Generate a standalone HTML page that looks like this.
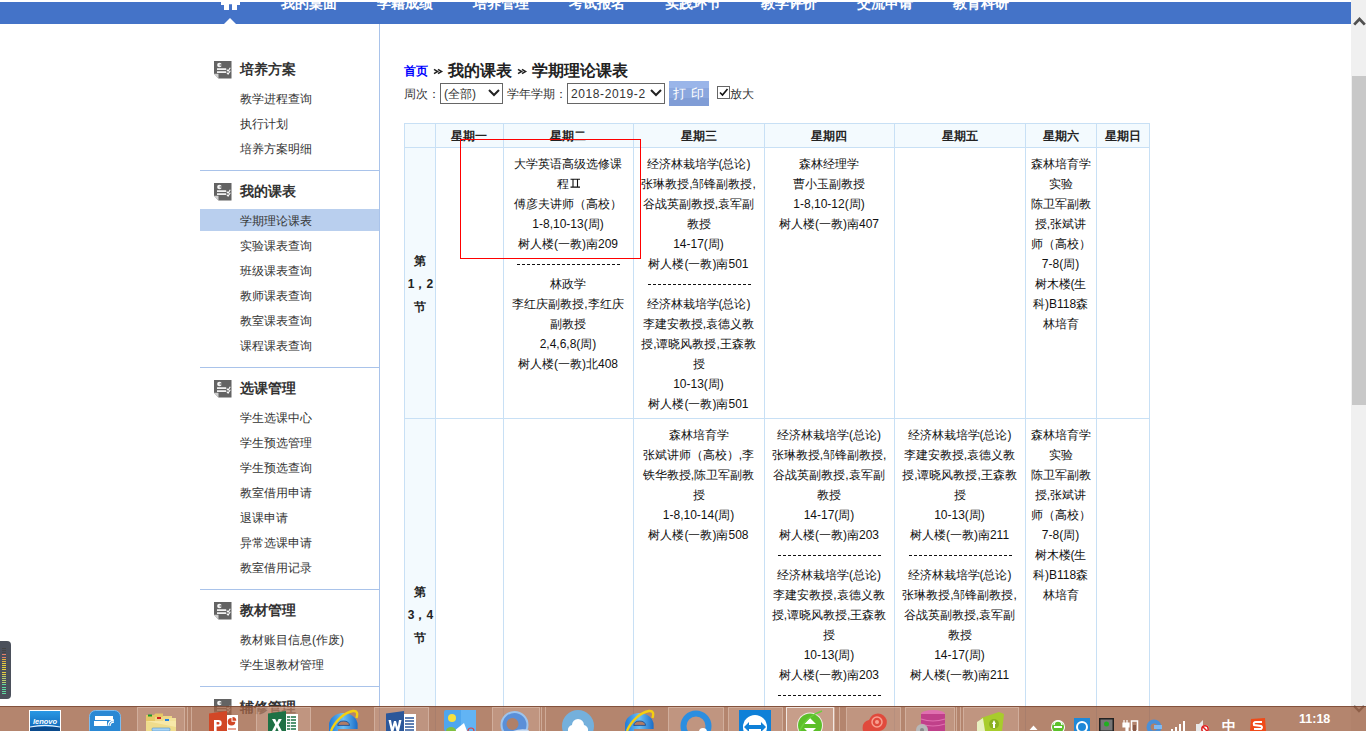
<!DOCTYPE html><html><head><meta charset="utf-8"><style>

html,body{margin:0;padding:0;}
body{width:1366px;height:731px;overflow:hidden;position:relative;background:#fff;font-family:"Liberation Sans",sans-serif;color:#333;}
.a{position:absolute;white-space:nowrap;}
.t12{font-size:12px;line-height:20px;height:20px;}
.tb{color:#111;}
.c{text-align:center;}
.nav{color:#fff;font-size:14px;font-weight:bold;line-height:20px;}
.sbt{font-size:14px;font-weight:bold;line-height:20px;color:#333;}
.sbi{font-size:12px;line-height:20px;color:#333;}
.ic{position:absolute;width:18px;height:18px;}
.vl{position:absolute;width:1px;background:#c8e0f5;}
.hl{position:absolute;height:1px;background:#c8e0f5;}
.dash{display:inline-block;position:relative;left:1px;width:104px;height:1px;vertical-align:middle;background:repeating-linear-gradient(90deg,#111 0 3px,transparent 3px 5px);}

</style></head><body>
<div class="a" style="left:0;top:2px;width:1351px;height:22px;background:#4473c8;"></div>
<svg class="a" style="left:218px;top:0" width="26" height="12" viewBox="0 0 26 12"><path d="M3 2 H22 V5 H19 V10 H14 V4.2 H11 V10 H6 V5 H3 Z" fill="#fff"/></svg>
<svg class="a" style="left:224px;top:17px" width="12" height="7" viewBox="0 0 12 7"><path d="M0 7 L6 1 L12 7 Z" fill="#fff"/></svg>
<div class="a nav" style="left:281px;top:-7px;height:20px;">我的桌面</div>
<div class="a nav" style="left:377px;top:-7px;height:20px;">学籍成绩</div>
<div class="a nav" style="left:473px;top:-7px;height:20px;">培养管理</div>
<div class="a nav" style="left:569px;top:-7px;height:20px;">考试报名</div>
<div class="a nav" style="left:665px;top:-7px;height:20px;">实践环节</div>
<div class="a nav" style="left:761px;top:-7px;height:20px;">教学评价</div>
<div class="a nav" style="left:857px;top:-7px;height:20px;">交流申请</div>
<div class="a nav" style="left:953px;top:-7px;height:20px;">教育科研</div>
<div class="a" style="left:0;top:0;width:1351px;height:2px;background:#fff;"></div>
<div class="a" style="left:379px;top:24px;width:1px;height:707px;background:#a9c3ea;"></div>
<div class="ic" style="left:214px;top:61px"><svg width="18" height="18" viewBox="0 0 18 18"><path d="M0 0 H17.5 V17.6 H4.5 L0 12.8 Z" fill="#636363"/><path d="M0 12.8 L4.5 12.8 L4.5 17.6 Z" fill="#d0d0d0"/><circle cx="5.4" cy="4" r="2.3" fill="#f4f4f4"/><rect x="5.6" y="3.4" width="2.4" height="1.2" fill="#636363"/><rect x="3" y="7.3" width="9.2" height="1.6" fill="#fff"/><rect x="3" y="10.3" width="9.2" height="1.6" fill="#fff"/><path d="M12.8 8.6 L14.1 10.1 L16.3 6.8 M12.8 11.6 L14.1 13.1 L16.3 9.8" stroke="#fff" stroke-width="1.1" fill="none"/></svg></div>
<div class="a sbt" style="left:240px;top:59px">培养方案</div>
<div class="a sbi" style="left:240px;top:89px">教学进程查询</div>
<div class="a sbi" style="left:240px;top:114px">执行计划</div>
<div class="a sbi" style="left:240px;top:139px">培养方案明细</div>
<div class="a" style="left:200px;top:170px;width:179px;height:1px;background:#a9c3ea;"></div>
<div class="ic" style="left:214px;top:183px"><svg width="18" height="18" viewBox="0 0 18 18"><path d="M0 0 H17.5 V17.6 H4.5 L0 12.8 Z" fill="#636363"/><path d="M0 12.8 L4.5 12.8 L4.5 17.6 Z" fill="#d0d0d0"/><circle cx="5.4" cy="4" r="2.3" fill="#f4f4f4"/><rect x="5.6" y="3.4" width="2.4" height="1.2" fill="#636363"/><rect x="3" y="7.3" width="9.2" height="1.6" fill="#fff"/><rect x="3" y="10.3" width="9.2" height="1.6" fill="#fff"/><path d="M12.8 8.6 L14.1 10.1 L16.3 6.8 M12.8 11.6 L14.1 13.1 L16.3 9.8" stroke="#fff" stroke-width="1.1" fill="none"/></svg></div>
<div class="a sbt" style="left:240px;top:181px">我的课表</div>
<div class="a" style="left:200px;top:209px;width:179px;height:22px;background:#b9cfee;"></div>
<div class="a sbi" style="left:240px;top:211px">学期理论课表</div>
<div class="a sbi" style="left:240px;top:236px">实验课表查询</div>
<div class="a sbi" style="left:240px;top:261px">班级课表查询</div>
<div class="a sbi" style="left:240px;top:286px">教师课表查询</div>
<div class="a sbi" style="left:240px;top:311px">教室课表查询</div>
<div class="a sbi" style="left:240px;top:336px">课程课表查询</div>
<div class="a" style="left:200px;top:367px;width:179px;height:1px;background:#a9c3ea;"></div>
<div class="ic" style="left:214px;top:380px"><svg width="18" height="18" viewBox="0 0 18 18"><path d="M0 0 H17.5 V17.6 H4.5 L0 12.8 Z" fill="#636363"/><path d="M0 12.8 L4.5 12.8 L4.5 17.6 Z" fill="#d0d0d0"/><circle cx="5.4" cy="4" r="2.3" fill="#f4f4f4"/><rect x="5.6" y="3.4" width="2.4" height="1.2" fill="#636363"/><rect x="3" y="7.3" width="9.2" height="1.6" fill="#fff"/><rect x="3" y="10.3" width="9.2" height="1.6" fill="#fff"/><path d="M12.8 8.6 L14.1 10.1 L16.3 6.8 M12.8 11.6 L14.1 13.1 L16.3 9.8" stroke="#fff" stroke-width="1.1" fill="none"/></svg></div>
<div class="a sbt" style="left:240px;top:378px">选课管理</div>
<div class="a sbi" style="left:240px;top:408px">学生选课中心</div>
<div class="a sbi" style="left:240px;top:433px">学生预选管理</div>
<div class="a sbi" style="left:240px;top:458px">学生预选查询</div>
<div class="a sbi" style="left:240px;top:483px">教室借用申请</div>
<div class="a sbi" style="left:240px;top:508px">退课申请</div>
<div class="a sbi" style="left:240px;top:533px">异常选课申请</div>
<div class="a sbi" style="left:240px;top:558px">教室借用记录</div>
<div class="a" style="left:200px;top:589px;width:179px;height:1px;background:#a9c3ea;"></div>
<div class="ic" style="left:214px;top:602px"><svg width="18" height="18" viewBox="0 0 18 18"><path d="M0 0 H17.5 V17.6 H4.5 L0 12.8 Z" fill="#636363"/><path d="M0 12.8 L4.5 12.8 L4.5 17.6 Z" fill="#d0d0d0"/><circle cx="5.4" cy="4" r="2.3" fill="#f4f4f4"/><rect x="5.6" y="3.4" width="2.4" height="1.2" fill="#636363"/><rect x="3" y="7.3" width="9.2" height="1.6" fill="#fff"/><rect x="3" y="10.3" width="9.2" height="1.6" fill="#fff"/><path d="M12.8 8.6 L14.1 10.1 L16.3 6.8 M12.8 11.6 L14.1 13.1 L16.3 9.8" stroke="#fff" stroke-width="1.1" fill="none"/></svg></div>
<div class="a sbt" style="left:240px;top:600px">教材管理</div>
<div class="a sbi" style="left:240px;top:630px">教材账目信息(作废)</div>
<div class="a sbi" style="left:240px;top:655px">学生退教材管理</div>
<div class="a" style="left:200px;top:686px;width:179px;height:1px;background:#a9c3ea;"></div>
<div class="ic" style="left:214px;top:699px"><svg width="18" height="18" viewBox="0 0 18 18"><path d="M0 0 H17.5 V17.6 H4.5 L0 12.8 Z" fill="#636363"/><path d="M0 12.8 L4.5 12.8 L4.5 17.6 Z" fill="#d0d0d0"/><circle cx="5.4" cy="4" r="2.3" fill="#f4f4f4"/><rect x="5.6" y="3.4" width="2.4" height="1.2" fill="#636363"/><rect x="3" y="7.3" width="9.2" height="1.6" fill="#fff"/><rect x="3" y="10.3" width="9.2" height="1.6" fill="#fff"/><path d="M12.8 8.6 L14.1 10.1 L16.3 6.8 M12.8 11.6 L14.1 13.1 L16.3 9.8" stroke="#fff" stroke-width="1.1" fill="none"/></svg></div>
<div class="a sbt" style="left:240px;top:697px">辅修管理</div>
<div class="a" style="left:404px;top:61px;font-size:12px;line-height:20px;color:#0000ff;font-weight:bold;">首页</div>
<svg class="a" style="left:433px;top:68px" width="11" height="7" viewBox="0 0 11 7"><path d="M1 1.3 L4.6 3.5 L1 5.7 M5 1.3 L8.6 3.5 L5 5.7" stroke="#222" stroke-width="1.5" fill="none"/></svg>
<div class="a" style="left:448px;top:60px;font-size:16px;line-height:22px;color:#222;font-weight:bold;">我的课表</div>
<svg class="a" style="left:517px;top:68px" width="11" height="7" viewBox="0 0 11 7"><path d="M1 1.3 L4.6 3.5 L1 5.7 M5 1.3 L8.6 3.5 L5 5.7" stroke="#222" stroke-width="1.5" fill="none"/></svg>
<div class="a" style="left:532px;top:60px;font-size:16px;line-height:22px;color:#222;font-weight:bold;">学期理论课表</div>
<div class="a t12" style="left:404px;top:84px;">周次：</div>
<div class="a" style="left:440px;top:83px;width:61px;height:19px;border:1px solid #666;"></div>
<div class="a t12" style="left:444px;top:84px;">(全部)</div>
<svg class="a" style="left:488px;top:89px" width="12" height="8" viewBox="0 0 12 8"><path d="M1 1 L6 6 L11 1" stroke="#222" stroke-width="2" fill="none"/></svg>
<div class="a t12" style="left:507px;top:84px;">学年学期：</div>
<div class="a" style="left:567px;top:83px;width:96px;height:19px;border:1px solid #666;"></div>
<div class="a t12" style="left:571px;top:84px;letter-spacing:0.6px;">2018-2019-2</div>
<svg class="a" style="left:650px;top:89px" width="12" height="8" viewBox="0 0 12 8"><path d="M1 1 L6 6 L11 1" stroke="#222" stroke-width="2" fill="none"/></svg>
<div class="a" style="left:669px;top:81px;width:40px;height:25px;background:linear-gradient(#9ab5e9 0%,#9ab5e9 28%,#8ba7de 28%,#8ba7de 68%,#809dd6 68%,#809dd6 100%);"></div>
<div class="a" style="left:673px;top:84px;font-size:13px;line-height:20px;color:#fff;letter-spacing:0.5px;">打 印</div>
<div class="a" style="left:717px;top:86px;width:11px;height:11px;border:1px solid #666;background:#fff;"></div>
<svg class="a" style="left:718px;top:87px" width="11" height="11" viewBox="0 0 11 11"><path d="M2 5.5 L4.5 8 L9.5 2" stroke="#111" stroke-width="1.6" fill="none"/></svg>
<div class="a t12" style="left:730px;top:84px;">放大</div>
<div class="a" style="left:404px;top:123px;width:745px;height:24px;background:#f3fafe;"></div>
<div class="a" style="left:404px;top:123px;width:31px;height:777px;background:#f3fafe;"></div>
<div class="vl" style="left:404px;top:123px;height:777px"></div>
<div class="vl" style="left:435px;top:123px;height:777px"></div>
<div class="vl" style="left:503px;top:123px;height:777px"></div>
<div class="vl" style="left:633px;top:123px;height:777px"></div>
<div class="vl" style="left:764px;top:123px;height:777px"></div>
<div class="vl" style="left:894px;top:123px;height:777px"></div>
<div class="vl" style="left:1025px;top:123px;height:777px"></div>
<div class="vl" style="left:1096px;top:123px;height:777px"></div>
<div class="vl" style="left:1149px;top:123px;height:777px"></div>
<div class="hl" style="left:404px;top:123px;width:746px"></div>
<div class="hl" style="left:404px;top:147px;width:746px"></div>
<div class="hl" style="left:404px;top:418px;width:746px"></div>
<div class="a t12 c" style="left:435px;width:68px;top:126px;font-weight:bold;color:#222;">星期一</div>
<div class="a t12 c" style="left:503px;width:130px;top:126px;font-weight:bold;color:#222;">星期二</div>
<div class="a t12 c" style="left:633px;width:131px;top:126px;font-weight:bold;color:#222;">星期三</div>
<div class="a t12 c" style="left:764px;width:130px;top:126px;font-weight:bold;color:#222;">星期四</div>
<div class="a t12 c" style="left:894px;width:131px;top:126px;font-weight:bold;color:#222;">星期五</div>
<div class="a t12 c" style="left:1025px;width:71px;top:126px;font-weight:bold;color:#222;">星期六</div>
<div class="a t12 c" style="left:1096px;width:53px;top:126px;font-weight:bold;color:#222;">星期日</div>
<div class="a t12 c tb" style="left:503px;width:130px;top:154px;">大学英语高级选修课</div>
<div class="a t12 c tb" style="left:503px;width:130px;top:174px;"></div>
<div class="a t12 c tb" style="left:503px;width:130px;top:194px;">傅彦夫讲师（高校）</div>
<div class="a t12 c tb" style="left:503px;width:130px;top:214px;">1-8,10-13(周)</div>
<div class="a t12 c tb" style="left:503px;width:130px;top:234px;">树人楼(一教)南209</div>
<div class="a t12 c tb" style="left:503px;width:130px;top:254px;"><span class="dash"></span></div>
<div class="a t12 c tb" style="left:503px;width:130px;top:274px;">林政学</div>
<div class="a t12 c tb" style="left:503px;width:130px;top:294px;">李红庆副教授,李红庆</div>
<div class="a t12 c tb" style="left:503px;width:130px;top:314px;">副教授</div>
<div class="a t12 c tb" style="left:503px;width:130px;top:334px;">2,4,6,8(周)</div>
<div class="a t12 c tb" style="left:503px;width:130px;top:354px;">树人楼(一教)北408</div>
<div class="a t12 c tb" style="left:633px;width:131px;top:154px;">经济林栽培学(总论)</div>
<div class="a t12 c tb" style="left:633px;width:131px;top:174px;">张琳教授,邹锋副教授,</div>
<div class="a t12 c tb" style="left:633px;width:131px;top:194px;">谷战英副教授,袁军副</div>
<div class="a t12 c tb" style="left:633px;width:131px;top:214px;">教授</div>
<div class="a t12 c tb" style="left:633px;width:131px;top:234px;">14-17(周)</div>
<div class="a t12 c tb" style="left:633px;width:131px;top:254px;">树人楼(一教)南501</div>
<div class="a t12 c tb" style="left:633px;width:131px;top:274px;"><span class="dash"></span></div>
<div class="a t12 c tb" style="left:633px;width:131px;top:294px;">经济林栽培学(总论)</div>
<div class="a t12 c tb" style="left:633px;width:131px;top:314px;">李建安教授,袁德义教</div>
<div class="a t12 c tb" style="left:633px;width:131px;top:334px;">授,谭晓风教授,王森教</div>
<div class="a t12 c tb" style="left:633px;width:131px;top:354px;">授</div>
<div class="a t12 c tb" style="left:633px;width:131px;top:374px;">10-13(周)</div>
<div class="a t12 c tb" style="left:633px;width:131px;top:394px;">树人楼(一教)南501</div>
<div class="a t12 c tb" style="left:764px;width:130px;top:154px;">森林经理学</div>
<div class="a t12 c tb" style="left:764px;width:130px;top:174px;">曹小玉副教授</div>
<div class="a t12 c tb" style="left:764px;width:130px;top:194px;">1-8,10-12(周)</div>
<div class="a t12 c tb" style="left:764px;width:130px;top:214px;">树人楼(一教)南407</div>
<div class="a t12 c tb" style="left:1025px;width:71px;top:154px;">森林培育学</div>
<div class="a t12 c tb" style="left:1025px;width:71px;top:174px;">实验</div>
<div class="a t12 c tb" style="left:1025px;width:71px;top:194px;">陈卫军副教</div>
<div class="a t12 c tb" style="left:1025px;width:71px;top:214px;">授,张斌讲</div>
<div class="a t12 c tb" style="left:1025px;width:71px;top:234px;">师（高校）</div>
<div class="a t12 c tb" style="left:1025px;width:71px;top:254px;">7-8(周)</div>
<div class="a t12 c tb" style="left:1025px;width:71px;top:274px;">树木楼(生</div>
<div class="a t12 c tb" style="left:1025px;width:71px;top:294px;">科)B118森</div>
<div class="a t12 c tb" style="left:1025px;width:71px;top:314px;">林培育</div>
<div class="a t12 c tb" style="left:633px;width:131px;top:425px;">森林培育学</div>
<div class="a t12 c tb" style="left:633px;width:131px;top:445px;">张斌讲师（高校）,李</div>
<div class="a t12 c tb" style="left:633px;width:131px;top:465px;">铁华教授,陈卫军副教</div>
<div class="a t12 c tb" style="left:633px;width:131px;top:485px;">授</div>
<div class="a t12 c tb" style="left:633px;width:131px;top:505px;">1-8,10-14(周)</div>
<div class="a t12 c tb" style="left:633px;width:131px;top:525px;">树人楼(一教)南508</div>
<div class="a t12 c tb" style="left:764px;width:130px;top:425px;">经济林栽培学(总论)</div>
<div class="a t12 c tb" style="left:764px;width:130px;top:445px;">张琳教授,邹锋副教授,</div>
<div class="a t12 c tb" style="left:764px;width:130px;top:465px;">谷战英副教授,袁军副</div>
<div class="a t12 c tb" style="left:764px;width:130px;top:485px;">教授</div>
<div class="a t12 c tb" style="left:764px;width:130px;top:505px;">14-17(周)</div>
<div class="a t12 c tb" style="left:764px;width:130px;top:525px;">树人楼(一教)南203</div>
<div class="a t12 c tb" style="left:764px;width:130px;top:545px;"><span class="dash"></span></div>
<div class="a t12 c tb" style="left:764px;width:130px;top:565px;">经济林栽培学(总论)</div>
<div class="a t12 c tb" style="left:764px;width:130px;top:585px;">李建安教授,袁德义教</div>
<div class="a t12 c tb" style="left:764px;width:130px;top:605px;">授,谭晓风教授,王森教</div>
<div class="a t12 c tb" style="left:764px;width:130px;top:625px;">授</div>
<div class="a t12 c tb" style="left:764px;width:130px;top:645px;">10-13(周)</div>
<div class="a t12 c tb" style="left:764px;width:130px;top:665px;">树人楼(一教)南203</div>
<div class="a t12 c tb" style="left:764px;width:130px;top:685px;"><span class="dash"></span></div>
<div class="a t12 c tb" style="left:894px;width:131px;top:425px;">经济林栽培学(总论)</div>
<div class="a t12 c tb" style="left:894px;width:131px;top:445px;">李建安教授,袁德义教</div>
<div class="a t12 c tb" style="left:894px;width:131px;top:465px;">授,谭晓风教授,王森教</div>
<div class="a t12 c tb" style="left:894px;width:131px;top:485px;">授</div>
<div class="a t12 c tb" style="left:894px;width:131px;top:505px;">10-13(周)</div>
<div class="a t12 c tb" style="left:894px;width:131px;top:525px;">树人楼(一教)南211</div>
<div class="a t12 c tb" style="left:894px;width:131px;top:545px;"><span class="dash"></span></div>
<div class="a t12 c tb" style="left:894px;width:131px;top:565px;">经济林栽培学(总论)</div>
<div class="a t12 c tb" style="left:894px;width:131px;top:585px;">张琳教授,邹锋副教授,</div>
<div class="a t12 c tb" style="left:894px;width:131px;top:605px;">谷战英副教授,袁军副</div>
<div class="a t12 c tb" style="left:894px;width:131px;top:625px;">教授</div>
<div class="a t12 c tb" style="left:894px;width:131px;top:645px;">14-17(周)</div>
<div class="a t12 c tb" style="left:894px;width:131px;top:665px;">树人楼(一教)南211</div>
<div class="a t12 c tb" style="left:1025px;width:71px;top:425px;">森林培育学</div>
<div class="a t12 c tb" style="left:1025px;width:71px;top:445px;">实验</div>
<div class="a t12 c tb" style="left:1025px;width:71px;top:465px;">陈卫军副教</div>
<div class="a t12 c tb" style="left:1025px;width:71px;top:485px;">授,张斌讲</div>
<div class="a t12 c tb" style="left:1025px;width:71px;top:505px;">师（高校）</div>
<div class="a t12 c tb" style="left:1025px;width:71px;top:525px;">7-8(周)</div>
<div class="a t12 c tb" style="left:1025px;width:71px;top:545px;">树木楼(生</div>
<div class="a t12 c tb" style="left:1025px;width:71px;top:565px;">科)B118森</div>
<div class="a t12 c tb" style="left:1025px;width:71px;top:585px;">林培育</div>
<div class="a t12 c" style="left:404px;width:31px;top:251px;font-weight:bold;color:#222;">第</div>
<div class="a t12 c" style="left:405px;width:31px;top:274px;font-weight:bold;color:#222;">1，2</div>
<div class="a t12 c" style="left:404px;width:31px;top:297px;font-weight:bold;color:#222;">节</div>
<div class="a t12 c" style="left:404px;width:31px;top:582px;font-weight:bold;color:#222;">第</div>
<div class="a t12 c" style="left:405px;width:31px;top:605px;font-weight:bold;color:#222;">3，4</div>
<div class="a t12 c" style="left:404px;width:31px;top:628px;font-weight:bold;color:#222;">节</div>
<div class="a t12 tb" style="left:557px;top:174px;">程</div>
<svg class="a" style="left:570px;top:178px" width="11" height="10" viewBox="0 0 11 10"><path d="M0.5 1.2 H10 M0.5 9.1 H10 M3 1.2 V9.1 M7.5 1.2 V9.1" stroke="#111" stroke-width="1.1" fill="none"/></svg>
<div class="a" style="left:460px;top:139px;width:181px;height:120px;box-sizing:border-box;border:1px solid #ff0000;"></div>
<div class="a" style="left:1351px;top:0;width:15px;height:731px;background:#f0f0f0;"></div>
<div class="a" style="left:1352px;top:76px;width:14px;height:329px;background:#c8c8c8;"></div>
<svg class="a" style="left:1352px;top:16px" width="14" height="10" viewBox="0 0 14 10"><path d="M2.2 8.6 L7.5 3 L12.8 8.6" stroke="#505050" stroke-width="2.8" fill="none"/></svg>
<svg class="a" style="left:1352px;top:704px" width="14" height="10" viewBox="0 0 14 10"><path d="M2 2 L7 7 L12 2" stroke="#555" stroke-width="2.4" fill="none"/></svg>
<div class="a" style="left:-4px;top:641px;width:15px;height:58px;background:#4b505b;border-radius:4px;"></div>
<div class="a" style="left:2px;top:648px;width:4px;height:1px;background:#444;"></div>
<div class="a" style="left:2px;top:650px;width:4px;height:1px;background:#444;"></div>
<div class="a" style="left:2px;top:652px;width:4px;height:1px;background:#444;"></div>
<div class="a" style="left:2px;top:654px;width:4px;height:1px;background:#e0806a;"></div>
<div class="a" style="left:2px;top:657px;width:4px;height:1px;background:#e0806a;"></div>
<div class="a" style="left:2px;top:659px;width:4px;height:1px;background:#e0b040;"></div>
<div class="a" style="left:2px;top:661px;width:4px;height:1px;background:#e0b040;"></div>
<div class="a" style="left:2px;top:663px;width:4px;height:1px;background:#e8d040;"></div>
<div class="a" style="left:2px;top:665px;width:4px;height:1px;background:#e8d040;"></div>
<div class="a" style="left:2px;top:667px;width:4px;height:1px;background:#e8d040;"></div>
<div class="a" style="left:2px;top:669px;width:4px;height:1px;background:#e8d040;"></div>
<div class="a" style="left:2px;top:672px;width:4px;height:1px;background:#e8d040;"></div>
<div class="a" style="left:2px;top:674px;width:4px;height:1px;background:#e8d040;"></div>
<div class="a" style="left:2px;top:676px;width:4px;height:1px;background:#b8d070;"></div>
<div class="a" style="left:2px;top:678px;width:4px;height:1px;background:#b8d070;"></div>
<div class="a" style="left:2px;top:680px;width:4px;height:1px;background:#b8d070;"></div>
<div class="a" style="left:2px;top:682px;width:4px;height:1px;background:#b8d070;"></div>
<div class="a" style="left:2px;top:684px;width:4px;height:1px;background:#60d8a0;"></div>
<div class="a" style="left:2px;top:687px;width:4px;height:1px;background:#60d8a0;"></div>
<div class="a" style="left:2px;top:689px;width:4px;height:1px;background:#60d8a0;"></div>
<div class="a" style="left:2px;top:691px;width:4px;height:1px;background:#60d8a0;"></div>
<div class="a" style="left:2px;top:693px;width:4px;height:1px;background:#60d8a0;"></div>
<div class="a" style="left:0;top:706px;width:1366px;height:25px;background:rgba(159,99,69,0.78);border-top:1px solid rgba(110,60,40,0.7);box-sizing:border-box;"></div>
<div class="a" style="left:137px;top:707px;width:46px;height:26px;background:rgba(255,235,225,0.16);border:1px solid rgba(255,240,230,0.28);"></div>
<div class="a" style="left:256px;top:707px;width:53px;height:26px;background:rgba(255,235,225,0.16);border:1px solid rgba(255,240,230,0.28);"></div>
<div class="a" style="left:374px;top:707px;width:53px;height:26px;background:rgba(255,235,225,0.16);border:1px solid rgba(255,240,230,0.28);"></div>
<div class="a" style="left:492px;top:707px;width:46px;height:26px;background:rgba(255,235,225,0.16);border:1px solid rgba(255,240,230,0.28);"></div>
<div class="a" style="left:668px;top:707px;width:54px;height:26px;background:rgba(255,235,225,0.16);border:1px solid rgba(255,240,230,0.28);"></div>
<div class="a" style="left:728px;top:707px;width:53px;height:26px;background:rgba(255,235,225,0.16);border:1px solid rgba(255,240,230,0.28);"></div>
<div class="a" style="left:846px;top:707px;width:53px;height:26px;background:rgba(255,235,225,0.16);border:1px solid rgba(255,240,230,0.28);"></div>
<div class="a" style="left:905px;top:707px;width:48px;height:26px;background:rgba(255,235,225,0.16);border:1px solid rgba(255,240,230,0.28);"></div>
<div class="a" style="left:963px;top:707px;width:54px;height:26px;background:rgba(255,235,225,0.16);border:1px solid rgba(255,240,230,0.28);"></div>
<div class="a" style="left:786px;top:707px;width:46px;height:26px;background:rgba(255,235,225,0.25);border:1px solid rgba(255,255,255,0.75);"></div>
<div class="a" style="left:187px;top:707px;width:1px;height:24px;background:rgba(255,240,230,0.35);"></div>
<div class="a" style="left:191px;top:707px;width:1px;height:24px;background:rgba(255,240,230,0.35);"></div>
<div class="a" style="left:541px;top:707px;width:1px;height:24px;background:rgba(255,240,230,0.35);"></div>
<div class="a" style="left:545px;top:707px;width:1px;height:24px;background:rgba(255,240,230,0.35);"></div>
<div class="a" style="left:834px;top:707px;width:1px;height:24px;background:rgba(255,240,230,0.35);"></div>
<div class="a" style="left:839px;top:707px;width:1px;height:24px;background:rgba(255,240,230,0.35);"></div>
<div class="a" style="left:956px;top:707px;width:1px;height:24px;background:rgba(255,240,230,0.35);"></div>
<div class="a" style="left:960px;top:707px;width:1px;height:24px;background:rgba(255,240,230,0.35);"></div>
<svg class="a" style="left:29px;top:710px" width="32" height="21" viewBox="0 0 32 21"><defs><linearGradient id="lng" x1="0" y1="0" x2="0" y2="1"><stop offset="0" stop-color="#2a98e4"/><stop offset="1" stop-color="#0c62b4"/></linearGradient></defs><rect x="0" y="0" width="32" height="21" fill="#fff"/><rect x="1" y="1" width="30" height="20" fill="url(#lng)"/><rect x="1" y="17" width="30" height="4" fill="#0a4a8c"/><path d="M1 16.5 Q16 13 31 16.5 L31 17.5 Q16 14.5 1 17.5Z" fill="#e8f4ff"/><text x="16" y="13.5" font-family="Liberation Sans" font-size="7.5" font-style="italic" font-weight="bold" fill="#fff" text-anchor="middle">lenovo</text></svg>
<svg class="a" style="left:89px;top:710px" width="32" height="21" viewBox="0 0 32 21"><rect x="0.5" y="0.5" width="31" height="26" rx="6" fill="#2a88d4" stroke="#7dbcf0"/><rect x="6" y="6" width="18" height="4" fill="#fff"/><rect x="5" y="11" width="13" height="5" fill="#fff"/><path d="M19 16 a6 6 0 0 1 6 -6 M21 16 a4 4 0 0 1 4 -4" stroke="#fff" stroke-width="1.3" fill="none"/></svg>
<svg class="a" style="left:145px;top:713px" width="31" height="18" viewBox="0 0 31 18"><path d="M1 2 H9 L10.5 0.5 H18 V3 H22 V18 H1 Z" fill="#e6c766"/><rect x="3" y="1.5" width="4" height="2" fill="#1a9a2a"/><path d="M10 4 H17 L18.5 3 H27 V18 H10Z" fill="#efd884"/><rect x="12" y="4" width="4" height="2" fill="#d02020"/><path d="M18 6.5 H23 L24.5 5 H31 V18 H18Z" fill="#f3e29a"/><rect x="20" y="6" width="4" height="2" fill="#2080e0"/><path d="M1 8 H31 V18 H1Z" fill="#f7e8a8"/><path d="M1 8 L31 14 V18 H1Z" fill="#efdc8c"/><rect x="7" y="15" width="18" height="3" rx="1" fill="#a8d4f4" stroke="#4a90d0" stroke-width="0.6"/></svg>
<svg class="a" style="left:209px;top:710px" width="30" height="21" viewBox="0 0 30 21"><rect x="17" y="5" width="12" height="16" fill="#fff"/><path d="M0 3.5 L18 1 V21 H0 Z" fill="#d24726"/><path d="M5 10 H9.5 a3.2 3.2 0 0 1 0 6.4 H7.6 V21 H5 Z M7.6 12 V14.5 H9.3 a1.25 1.25 0 0 0 0 -2.5Z" fill="#fff" fill-rule="evenodd"/><path d="M22.5 8 a3.8 3.8 0 1 0 3.8 3.8 h-3.8 z" fill="#d24726"/><path d="M23.5 7 v3.8 h3.8 a3.8 3.8 0 0 0 -3.8 -3.8z" fill="#d24726"/><rect x="19" y="18.5" width="8" height="1" fill="#d24726"/></svg>
<svg class="a" style="left:268px;top:710px" width="30" height="21" viewBox="0 0 30 21"><rect x="17" y="4" width="13" height="17" fill="#fff"/><path d="M0 3.5 L18 1 V21 H0 Z" fill="#1e7145"/><path d="M4 9 H7.2 L8.9 12.6 L10.6 9 H13.8 L10.6 14.8 L13.8 21 H10.6 L8.9 17.2 L7.2 21 H4 L7.2 14.8 Z" fill="#fff"/><path d="M19 7 H28 M19 10 H28 M19 13 H28 M19 16 H28 M19 19 H28" stroke="#1e7145" stroke-width="1.4"/><path d="M22.5 5 V21" stroke="#fff" stroke-width="0.8"/></svg>
<svg class="a" style="left:327px;top:709px" width="32" height="22" viewBox="0 0 32 22"><defs><linearGradient id="ieg" x1="0" y1="0" x2="1" y2="0"><stop offset="0" stop-color="#1f7ad8"/><stop offset="0.5" stop-color="#6cc0f4"/><stop offset="1" stop-color="#1a6cc8"/></linearGradient></defs><path d="M2 22 V16 A14.3 12 0 0 1 30.6 16 V20 H11 V22 Z" fill="url(#ieg)"/><path d="M10.7 16.4 A6 5 0 0 1 22.6 16.4 Z" fill="#b07c66" stroke="#0d4a96" stroke-width="0.8"/><path d="M4 22 C8 12 18 3 26 2 C30 1.5 31 4 29.5 9" stroke="#f5d010" stroke-width="2.4" fill="none"/></svg>
<svg class="a" style="left:386px;top:710px" width="30" height="21" viewBox="0 0 30 21"><rect x="17" y="4" width="13" height="17" fill="#fff"/><path d="M0 3.5 L18 1 V21 H0 Z" fill="#2b579a"/><path d="M2.5 10 H5 L6.3 17 L8 11 H10 L11.7 17 L13 10 H15.5 L13 21 H10.5 L9 15.5 L7.5 21 H5 Z" fill="#fff"/><path d="M19 8 H28 M19 11 H28 M19 14 H28 M19 17 H28 M19 20 H28" stroke="#2b579a" stroke-width="1.3"/></svg>
<svg class="a" style="left:444px;top:710px" width="32" height="21" viewBox="0 0 32 21"><rect x="0" y="0" width="32" height="21" rx="2" fill="#4ea6ee"/><rect x="17" y="0" width="15" height="21" fill="#62b4f4"/><circle cx="8" cy="8" r="4" fill="#f5e040"/><path d="M10 21 L20 13 L23 21Z" fill="#fff"/><circle cx="27" cy="21" r="3" fill="none" stroke="#e04040" stroke-width="1.2"/><path d="M2 21 a5 4 0 0 1 10 0Z" fill="#80c040"/></svg>
<svg class="a" style="left:499px;top:710px" width="31" height="21" viewBox="0 0 31 21"><circle cx="15.5" cy="15" r="13" fill="#5a8fd8"/><circle cx="15.5" cy="15" r="13" fill="none" stroke="#9cc4ee" stroke-width="2"/><circle cx="13.5" cy="14" r="6" fill="#b08068"/><path d="M14 21 Q22 18 30 20 L28 24 Q22 24 16 23Z" fill="#c8dcf4"/></svg>
<svg class="a" style="left:562px;top:710px" width="32" height="21" viewBox="0 0 32 21"><circle cx="16" cy="16" r="16" fill="#74b0dc"/><path d="M6 21 a5 5 0 0 1 4 -6 a6 6 0 0 1 12 0 a5 5 0 0 1 4 6 Z" fill="#fff"/></svg>
<svg class="a" style="left:623px;top:709px" width="32" height="22" viewBox="0 0 32 22"><defs><linearGradient id="ieg2" x1="0" y1="0" x2="1" y2="0"><stop offset="0" stop-color="#1f7ad8"/><stop offset="0.5" stop-color="#6cc0f4"/><stop offset="1" stop-color="#1a6cc8"/></linearGradient></defs><path d="M2 22 V16 A14.3 12 0 0 1 30.6 16 V20 H11 V22 Z" fill="url(#ieg2)"/><path d="M10.7 16.4 A6 5 0 0 1 22.6 16.4 Z" fill="#b07c66" stroke="#0d4a96" stroke-width="0.8"/><path d="M4 22 C8 12 18 3 26 2 C30 1.5 31 4 29.5 9" stroke="#f5d010" stroke-width="2.4" fill="none"/></svg>
<svg class="a" style="left:680px;top:710px" width="32" height="21" viewBox="0 0 32 21"><circle cx="16" cy="16" r="12.5" fill="none" stroke="#2b8ee0" stroke-width="6"/><circle cx="23" cy="22" r="4" fill="#fff"/></svg>
<svg class="a" style="left:739px;top:710px" width="32" height="21" viewBox="0 0 32 21"><rect x="0" y="0" width="32" height="21" fill="#0e80d8"/><circle cx="16" cy="17" r="12" fill="#fff"/><path d="M5 17 L10 12 V15 H22 V12 L27 17 L22 22 V19 H10 V22 Z" fill="#0e80d8"/></svg>
<svg class="a" style="left:796px;top:710px" width="29" height="21" viewBox="0 0 29 21"><circle cx="14" cy="15.5" r="13" fill="#fff" opacity="0.8"/><circle cx="14" cy="15.5" r="12" fill="#5cbf2a"/><path d="M8 14 L14 8 L20 14 Z M8 18 H20 L14 24Z" fill="#fff"/><path d="M3 22 Q10 6 26 1" stroke="#6ad03a" stroke-width="1.5" fill="none"/></svg>
<svg class="a" style="left:859px;top:710px" width="30" height="21" viewBox="0 0 30 21"><path d="M4 21 Q2 12 10 10 Q14 2 22 4 Q30 8 27 16 Q24 22 16 21 Z" fill="#e04a3c"/><circle cx="18" cy="12" r="5" fill="none" stroke="#f8a090" stroke-width="1.5"/><circle cx="18" cy="12" r="2" fill="#f8a090"/></svg>
<svg class="a" style="left:914px;top:710px" width="32" height="21" viewBox="0 0 32 21"><ellipse cx="19" cy="4" rx="12" ry="4" fill="#e070b0"/><rect x="7" y="4" width="24" height="17" fill="#c0408a"/><path d="M7 9 Q19 13 31 9 M7 14 Q19 18 31 14" stroke="#e070b0" stroke-width="1.2" fill="none"/><circle cx="8" cy="20" r="6" fill="#b8b8b8"/><circle cx="8" cy="20" r="2" fill="#888"/></svg>
<svg class="a" style="left:977px;top:710px" width="28" height="21" viewBox="0 0 28 21"><path d="M4 8 L22 2 L27 4 L25 21 H2 Z" fill="#a8cc2c"/><path d="M0 12 L6 8 L8 21 H0Z" fill="#e8f0c0"/><circle cx="17" cy="14" r="5" fill="#8ab020"/><path d="M17 10 L19 14 H15Z M16 14 H18 V18 H16Z" fill="#fff"/></svg>
<svg class="a" style="left:1029px;top:724px" width="9" height="7" viewBox="0 0 9 7"><path d="M0.5 6 L4.5 1.5 L8.5 6 Z" fill="#fff"/></svg>
<svg class="a" style="left:1050px;top:719px" width="16" height="12" viewBox="0 0 16 12"><circle cx="8" cy="8" r="7" fill="#fff"/><circle cx="8" cy="8" r="6" fill="#5cc02a"/><rect x="4" y="7" width="8" height="2" fill="#fff"/><path d="M4 6 a4 4 0 0 1 8 0" stroke="#fff" stroke-width="1.5" fill="none"/></svg>
<svg class="a" style="left:1074px;top:718px" width="16" height="13" viewBox="0 0 16 13"><rect x="0" y="0" width="16" height="13" fill="#1e88d8"/><circle cx="8" cy="9" r="5" fill="none" stroke="#fff" stroke-width="2"/></svg>
<svg class="a" style="left:1099px;top:718px" width="15" height="13" viewBox="0 0 15 13"><rect x="0" y="0" width="15" height="13" fill="#222"/><rect x="1.5" y="1.5" width="12" height="11" fill="#777"/><circle cx="7.5" cy="6" r="2.5" fill="#20b020"/></svg>
<svg class="a" style="left:1122px;top:719px" width="17" height="12" viewBox="0 0 17 12"><path d="M1 4 V8 H4 V12 H6 V8 H7 V4 Z M2 1 V4 M5 1 V4" stroke="#fff" stroke-width="1.2" fill="#fff"/><rect x="9.5" y="2" width="6" height="10" fill="none" stroke="#fff" stroke-width="1.5"/><rect x="11" y="6" width="3" height="6" fill="#8a5a48"/></svg>
<svg class="a" style="left:1146px;top:719px" width="16" height="12" viewBox="0 0 16 12"><circle cx="8" cy="8" r="7.5" fill="#4a90d8"/><circle cx="8" cy="8" r="3.5" fill="#b08068"/><rect x="8" y="6" width="8" height="4" fill="#80b8f0"/></svg>
<svg class="a" style="left:1170px;top:720px" width="16" height="11" viewBox="0 0 16 11"><path d="M1 11 V9 H3 V11 Z M5 11 V7 H7 V11Z M9 11 V4 H11 V11Z M13 11 V1 H15 V11Z" fill="#fff"/></svg>
<svg class="a" style="left:1195px;top:720px" width="15" height="11" viewBox="0 0 15 11"><path d="M1 4 H4 L8 0 V11 H1Z" fill="#e8e8e8"/><circle cx="10" cy="9" r="4" fill="#fff"/><circle cx="10" cy="9" r="3.2" fill="none" stroke="#e02020" stroke-width="1.5"/><path d="M7.5 6.5 L12.5 11.5" stroke="#e02020" stroke-width="1.5"/></svg>
<div class="a" style="left:1222px;top:718px;font-size:14px;line-height:16px;color:#fff;font-weight:bold;">中</div>
<svg class="a" style="left:1250px;top:718px" width="16" height="13" viewBox="0 0 16 13"><path d="M1 1 L15 0 L16 13 L0 13Z" fill="#f04a18"/><path d="M12 4 H6 Q3 4 4 7 L11 8 Q13 9 11 11 H4" stroke="#fff" stroke-width="2" fill="none"/></svg>
<div class="a" style="left:1299px;top:711px;font-size:12.5px;line-height:16px;color:#fff;font-weight:bold;">11:18</div>
</body></html>
